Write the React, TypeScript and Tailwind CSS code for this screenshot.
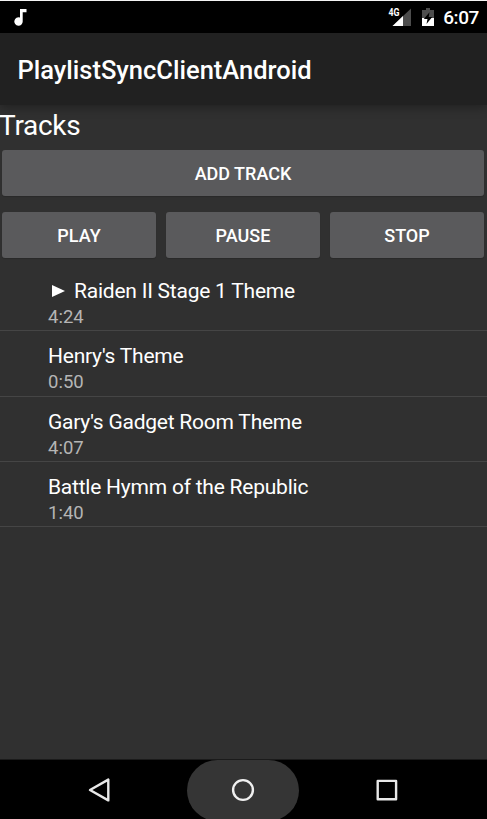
interface Track {
  title: string
  length: string
  playing?: boolean
}

const tracks: Track[] = [
  { title: 'Raiden II Stage 1 Theme', length: '4:24', playing: true },
  { title: "Henry's Theme", length: '0:50' },
  { title: "Gary's Gadget Room Theme", length: '4:07' },
  { title: 'Battle Hymm of the Republic', length: '1:40' },
]

export default function App() {
  return (
    <div className="flex h-[819px] w-[487px] flex-col overflow-hidden bg-[#303030] font-['Roboto',sans-serif] text-white">
      <StatusBar />
      <header className="relative flex h-[72px] shrink-0 items-center bg-[#212121] pt-0.5 pl-[17.5px] shadow-[0_2px_10px_rgba(0,0,0,0.35)]">
        <h1 className="text-[25.5px] leading-[30px] font-medium whitespace-nowrap">PlaylistSyncClientAndroid</h1>
      </header>

      <main className="flex flex-1 flex-col">
        <h2 className="mt-[3px] -ml-px h-[42px] text-[28px] leading-[35px] tracking-[-0.3px]">Tracks</h2>
        <div className="flex pr-[3px] pl-0.5">
          <Button label="ADD TRACK" />
        </div>
        <div className="mt-4 flex gap-2.5 pr-[3px] pl-0.5">
          <Button label="PLAY" />
          <Button label="PAUSE" />
          <Button label="STOP" />
        </div>
        <ul className="mt-2">
          {tracks.map((t) => (
            <TrackRow key={t.title} track={t} />
          ))}
        </ul>
      </main>

      <NavBar />
    </div>
  )
}

function StatusBar() {
  return (
    <div className="flex h-[33px] shrink-0 items-center border-t border-[#f4f4f4] bg-black pr-2 pl-3.5">
      <svg className="h-[17px] w-[13px]" viewBox="0 0 13 17" fill="white">
        <path d="M6 0h6.5v3.3H8.7v8.9A4.2 4.2 0 1 1 6 8.6z" />
      </svg>
      <div className="ml-auto flex items-center">
        <svg className="h-5 w-6" viewBox="0 0 24 20">
          <path d="M23 1.5V19H4.5z" fill="#4d4d4d" />
          <path d="M15 9V19H4.5z" fill="white" />
          <rect x="0" y="0" width="12" height="10.5" fill="black" />
          <text x="0.5" y="9" fill="white" fontSize="10" fontWeight="700" textLength="11" lengthAdjust="spacingAndGlyphs">4G</text>
        </svg>
        <svg className="ml-2.5 h-[18px] w-3" viewBox="0 0 12 18">
          <path d="M4 0h4v2h4v8H0V2h4z" fill="#4d4d4d" />
          <path d="M0 10h12v8H0z" fill="white" />
          <path d="M7.5 4.2L1.8 11h3.7l-1 5L10.2 9H6.7z" fill="black" />
        </svg>
        <span className="ml-[9px] pt-0.5 text-[19px] leading-5 font-medium tracking-[-0.4px]">6:07</span>
      </div>
    </div>
  )
}

function Button({ label }: { label: string }) {
  return (
    <button className="h-[46px] flex-1 rounded-[3px] bg-[#5a5a5c] pt-0.5 text-[18px] leading-[22px] font-medium shadow-[0_1px_1px_rgba(0,0,0,0.15)]">
      {label}
    </button>
  )
}

function TrackRow({ track }: { track: Track }) {
  return (
    <li className="flex h-[65.3px] flex-col border-b border-[#454545] pt-3 pl-12 whitespace-nowrap">
      <div className="flex text-[21px] leading-[26px] tracking-[-0.23px]">
        {track.playing && (
          <svg className="mt-[7px] mr-[9px] ml-1 h-3 w-[13px]" viewBox="0 0 13 12" fill="white">
            <path d="M0 0L13 6L0 12z" />
          </svg>
        )}
        {track.title}
      </div>
      <div className="text-[18.5px] leading-[27px] text-[#b5b5b5]">{track.length}</div>
    </li>
  )
}

function NavBar() {
  return (
    <nav className="flex h-[60px] shrink-0 items-start justify-center gap-8 overflow-hidden border-t border-[#1b1b1b] bg-black pr-0.5">
      <div className="flex h-[61px] w-28 items-center justify-center pb-0.5">
        <svg className="h-[26px] w-6" viewBox="0 0 24 26" fill="none" stroke="#e8e8e8" strokeWidth="2.4" strokeLinejoin="round">
          <path d="M3 13L21.3 2.6V23.4z" />
        </svg>
      </div>
      <div className="flex h-[61px] w-28 items-center justify-center rounded-full bg-[#353535] pb-0.5">
        <svg className="h-6 w-6" viewBox="0 0 24 24" fill="none" stroke="#f0f0f0" strokeWidth="2.4">
          <circle cx="12" cy="12" r="9.9" />
        </svg>
      </div>
      <div className="flex h-[61px] w-28 items-center justify-center pb-0.5">
        <svg className="h-6 w-6" viewBox="0 0 24 24" fill="none" stroke="#e8e8e8" strokeWidth="2.4" strokeLinejoin="round">
          <rect x="2.7" y="2.9" width="18.4" height="18.4" />
        </svg>
      </div>
    </nav>
  )
}
